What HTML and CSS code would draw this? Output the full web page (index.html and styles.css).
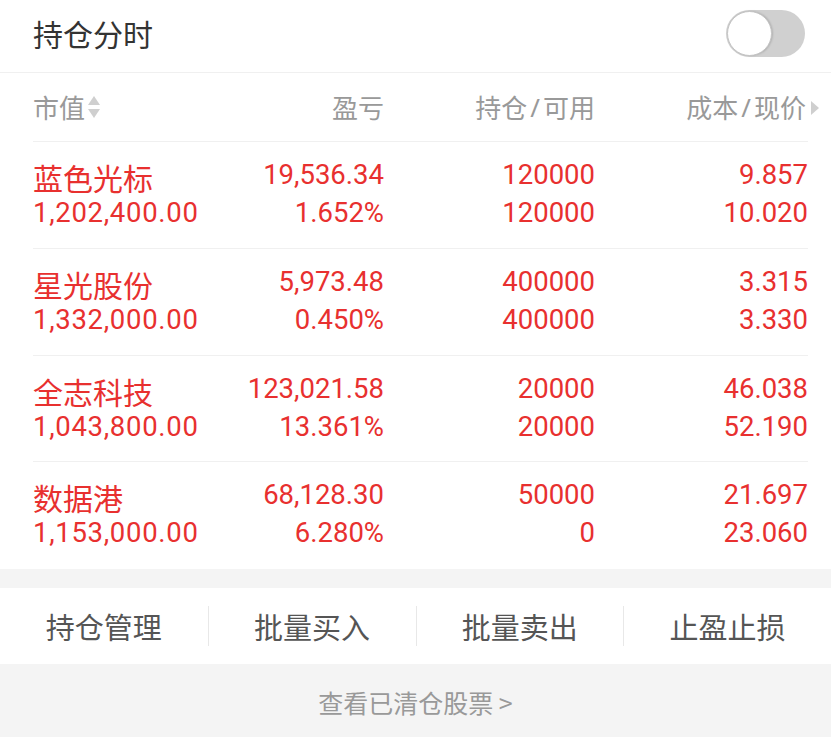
FILE: index.html
```html
<!DOCTYPE html>
<html lang="zh-CN">
<head>
<meta charset="utf-8">
<title>持仓分时</title>
<link rel="stylesheet" href="styles.css">
</head>
<body>
<div class="page">
  <div class="topbar">
    <div class="title">持仓分时</div>
    <div class="toggle"><span class="knob"></span></div>
  </div>
  <div class="list">
    <div class="grid head">
      <div class="hc left">市值<svg class="sort" width="14" height="24" viewBox="0 0 14 24"><path d="M7 1 L13 10 L1 10 Z" fill="#cfcfcf"/><path d="M1 14 L13 14 L7 23 Z" fill="#cfcfcf"/></svg></div>
      <div class="hc">盈亏</div>
      <div class="hc">持仓<span class="sl">/</span>可用</div>
      <div class="hc last">成本<span class="sl">/</span>现价<svg class="tri" width="8" height="14" viewBox="0 0 8 14"><path d="M0 0 L8 7 L0 14 Z" fill="#cfcfcf"/></svg></div>
    </div>
    <div class="grid row">
      <div class="c left"><div class="name">蓝色光标</div><div class="val">1,202,400.00</div></div>
      <div class="c"><div>19,536.34</div><div>1.652%</div></div>
      <div class="c"><div>120000</div><div>120000</div></div>
      <div class="c"><div>9.857</div><div>10.020</div></div>
    </div>
    <div class="grid row">
      <div class="c left"><div class="name">星光股份</div><div class="val">1,332,000.00</div></div>
      <div class="c"><div>5,973.48</div><div>0.450%</div></div>
      <div class="c"><div>400000</div><div>400000</div></div>
      <div class="c"><div>3.315</div><div>3.330</div></div>
    </div>
    <div class="grid row">
      <div class="c left"><div class="name">全志科技</div><div class="val">1,043,800.00</div></div>
      <div class="c"><div>123,021.58</div><div>13.361%</div></div>
      <div class="c"><div>20000</div><div>20000</div></div>
      <div class="c"><div>46.038</div><div>52.190</div></div>
    </div>
    <div class="grid row">
      <div class="c left"><div class="name">数据港</div><div class="val">1,153,000.00</div></div>
      <div class="c"><div>68,128.30</div><div>6.280%</div></div>
      <div class="c"><div>50000</div><div>0</div></div>
      <div class="c"><div>21.697</div><div>23.060</div></div>
    </div>
  </div>
  <div class="gap"></div>
  <div class="actions">
    <div class="act">持仓管理</div>
    <div class="act">批量买入</div>
    <div class="act">批量卖出</div>
    <div class="act">止盈止损</div>
  </div>
  <div class="footer">查看已清仓股票 &gt;</div>
</div>
</body>
</html>
```
FILE: styles.css
```css
html, body {
  margin: 0;
  padding: 0;
  background: #f4f4f4;
}
body {
  font-family: Roboto, "Noto Sans CJK SC", sans-serif;
  width: 831px;
  height: 737px;
  overflow: hidden;
}
.page {
  display: flex;
  flex-direction: column;
}
.topbar {
  height: 72px;
  background: #fff;
  border-bottom: 1px solid #f0f0f0;
  display: flex;
  align-items: center;
  justify-content: space-between;
  padding: 0 26px 0 33px;
}
.title {
  font-family: "Noto Sans CJK SC", sans-serif;
  font-size: 30px;
  color: #333;
  line-height: 40px;
  margin-top: -7px;
}
.toggle {
  position: relative;
  width: 79px;
  height: 47px;
  border-radius: 24px;
  background: #d0d0d0;
  margin-top: -6px;
}
.knob {
  position: absolute;
  left: 1px;
  top: 1px;
  width: 43px;
  height: 43px;
  border-radius: 50%;
  background: #fff;
  border: 1px solid #c4c4c4;
  box-shadow: 1px 0 2px rgba(0,0,0,0.15);
}
.list {
  background: #fff;
  padding: 0 23px 0 33px;
}
.grid {
  display: grid;
  grid-template-columns: 140px 211px 211px 213px;
}
.head {
  height: 68px;
  align-items: center;
  border-bottom: 1px solid #f0f0f0;
  font-family: "Noto Sans CJK SC", sans-serif;
  font-size: 26px;
  color: #999;
}
.hc {
  justify-self: end;
  display: flex;
  align-items: center;
  line-height: 36px;
}
.hc.left {
  justify-self: start;
}
.sl {
  font-family: "Noto Sans", sans-serif;
  padding: 0 3px;
}
.sort {
  margin-left: 2px;
}
.hc.last {
  margin-right: -11px;
}
.tri {
  margin-left: 5px;
  margin-top: 2px;
}
.row {
  height: 106.75px;
  box-sizing: border-box;
  padding-top: 14px;
  border-bottom: 1px solid #f0f0f0;
  color: #e8302f;
  font-size: 27.5px;
}
.row:last-child {
  border-bottom: none;
}
.c {
  text-align: right;
  line-height: 38px;
}
.c.left {
  text-align: left;
  white-space: nowrap;
}
.name {
  font-family: "Noto Sans CJK SC", sans-serif;
  font-size: 30px;
  line-height: 42px;
}
.val {
  line-height: 30px;
  letter-spacing: 0.7px;
}
.gap {
  height: 19px;
}
.actions {
  height: 76px;
  background: #fff;
  display: grid;
  grid-template-columns: repeat(4, 1fr);
  align-items: center;
}
.act {
  font-family: "Noto Sans CJK SC", sans-serif;
  font-size: 29px;
  color: #555;
  text-align: center;
  line-height: 40px;
  border-left: 1px solid #e8e8e8;
}
.act:first-child {
  border-left: none;
}
.footer {
  font-family: "Noto Sans CJK SC", sans-serif;
  font-size: 25px;
  color: #999;
  text-align: center;
  padding-top: 21px;
  line-height: 34px;
}
```
